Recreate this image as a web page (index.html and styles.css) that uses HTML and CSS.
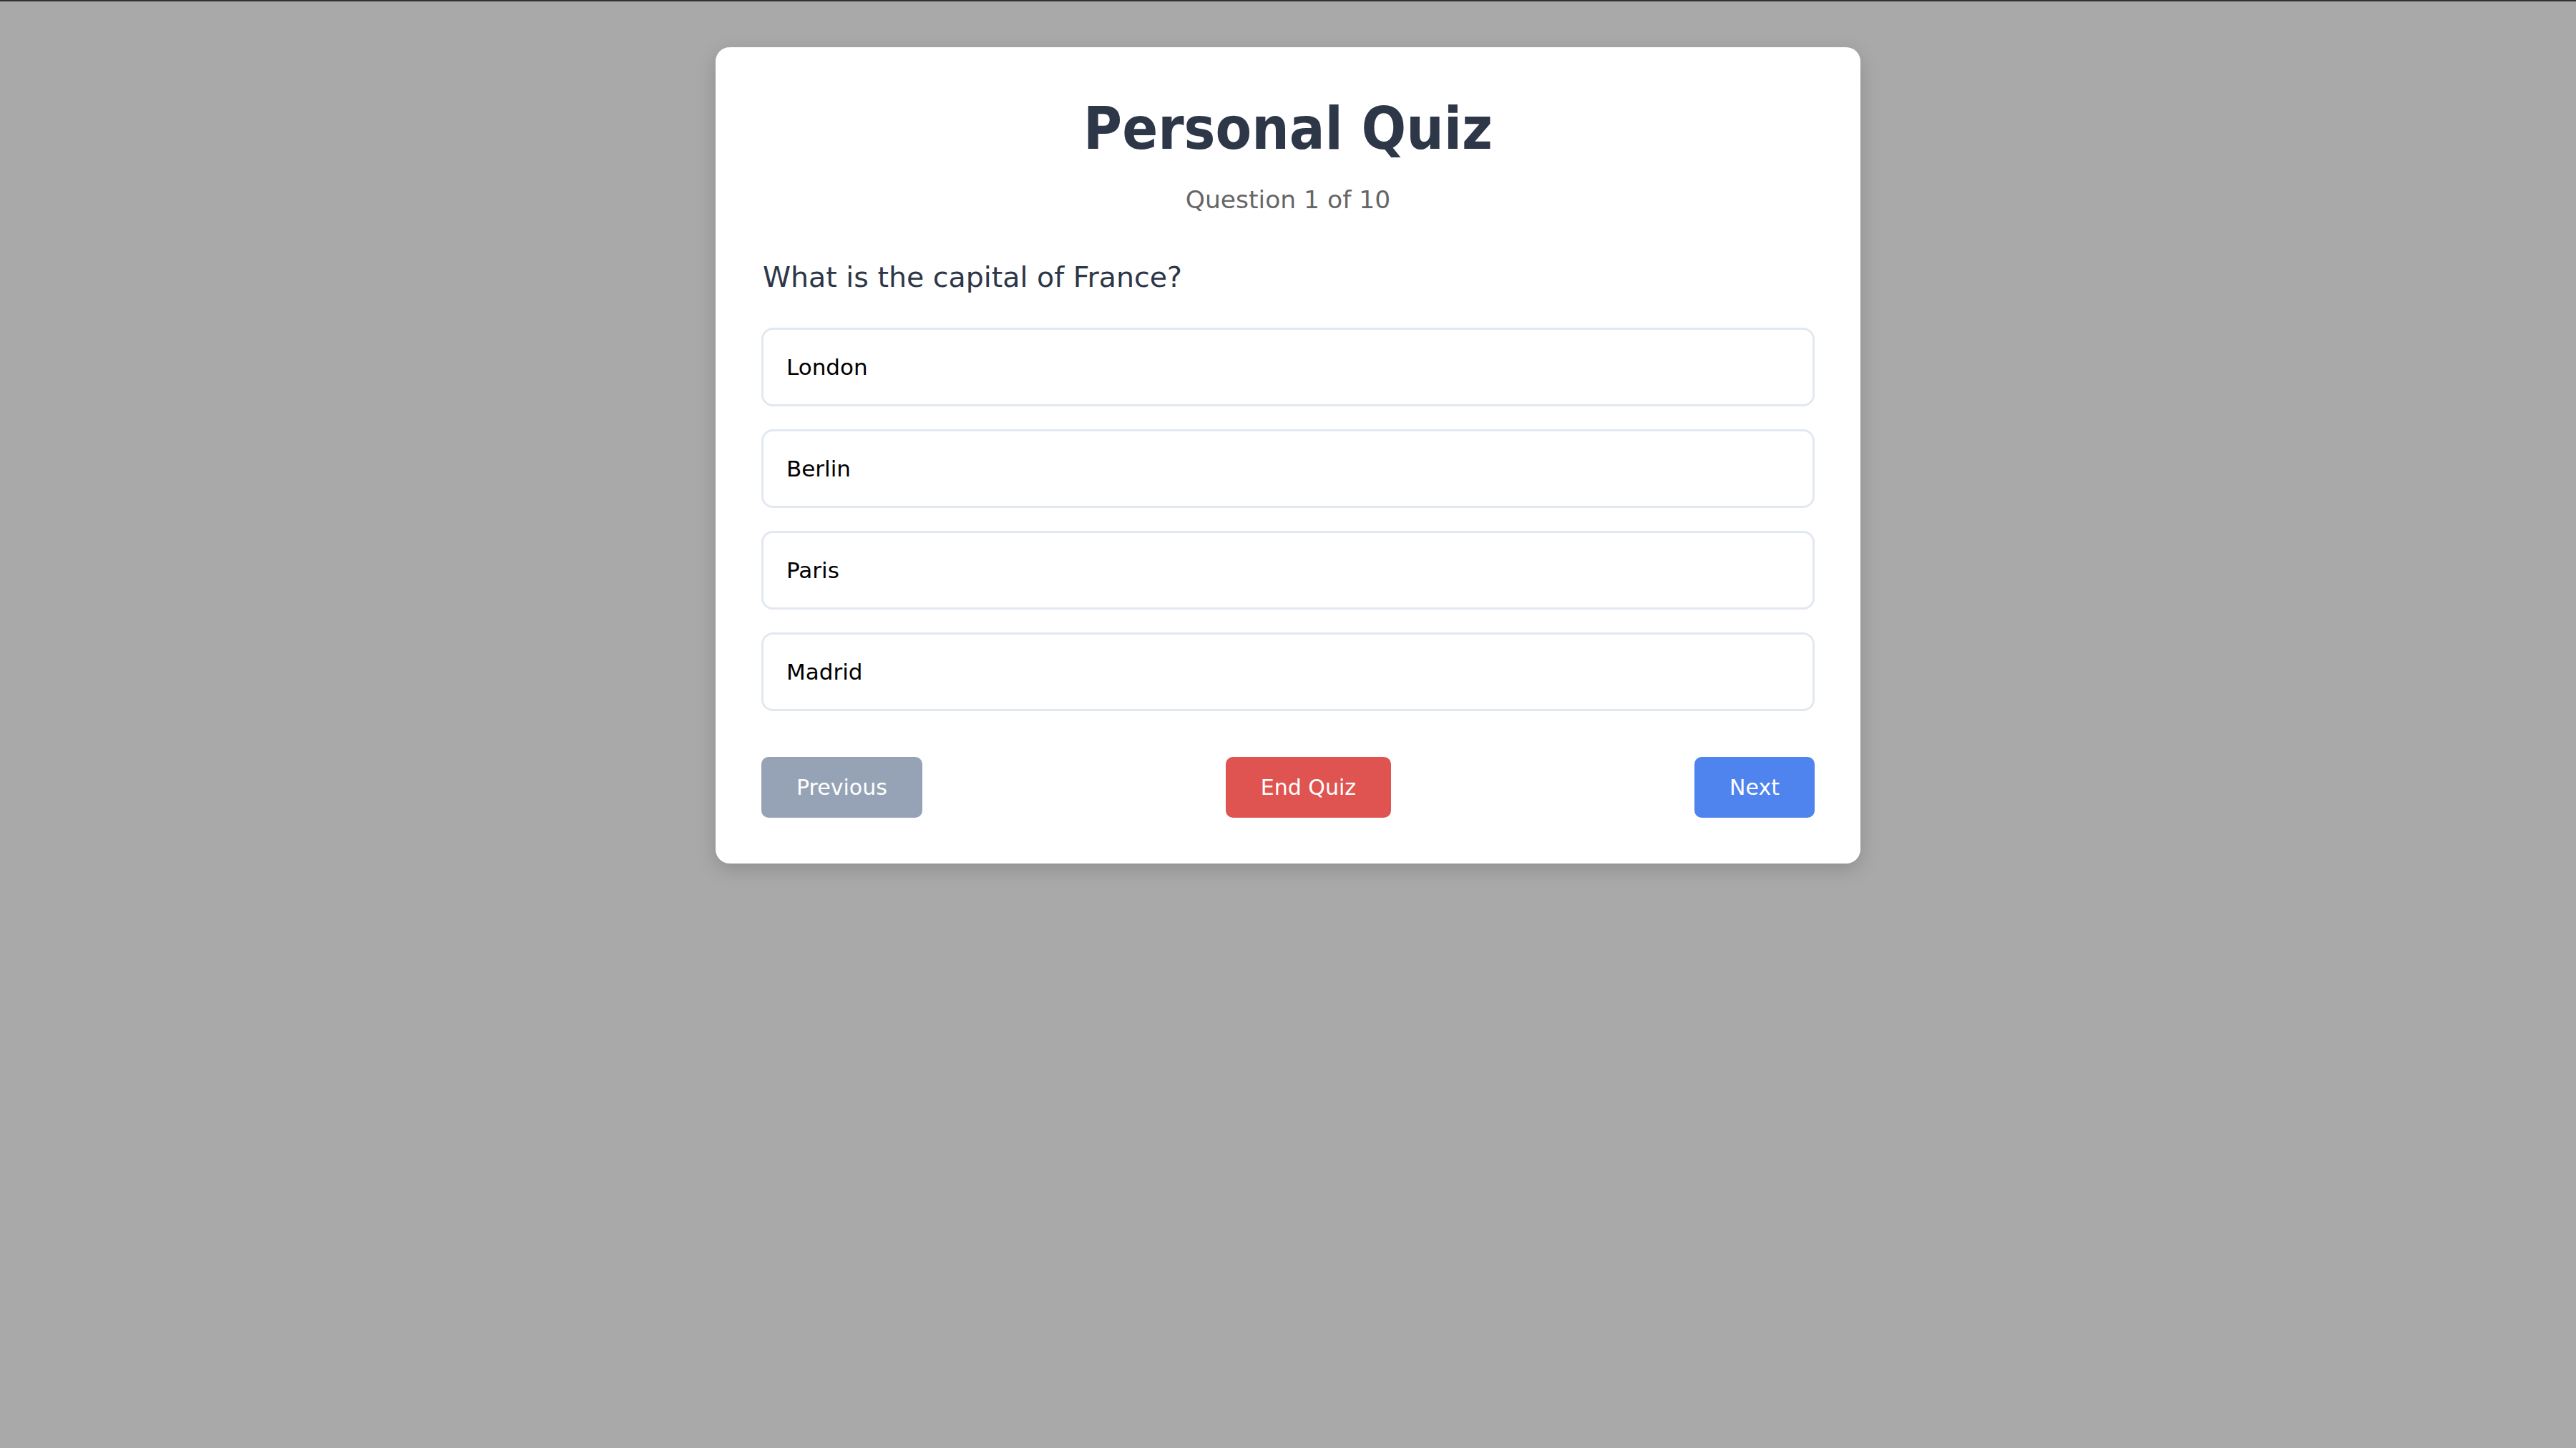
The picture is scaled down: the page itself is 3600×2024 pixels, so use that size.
FILE: index.html
```html
<!DOCTYPE html>
<html lang="en">
<head>
<meta charset="utf-8">
<title>Personal Quiz</title>
<link rel="stylesheet" href="styles.css">
</head>
<body>
<div class="page">
  <div class="card">
    <h1 class="title">Personal Quiz</h1>
    <p class="subtitle">Question 1 of 10</p>
    <h2 class="question">What is the capital of France?</h2>
    <div class="options">
      <button class="option">London</button>
      <button class="option">Berlin</button>
      <button class="option">Paris</button>
      <button class="option">Madrid</button>
    </div>
    <div class="actions">
      <button class="btn btn-prev">Previous</button>
      <button class="btn btn-end">End Quiz</button>
      <button class="btn btn-next">Next</button>
    </div>
  </div>
</div>
</body>
</html>
```
FILE: styles.css
```css
html, body {
  margin: 0;
  padding: 0;
}
body {
  background: #a9a9a9;
  border-top: 2px solid #333338;
  min-height: 2022px;
  box-sizing: border-box;
  font-family: "DejaVu Sans", "Liberation Sans", sans-serif;
}
.page {
  display: flex;
  justify-content: center;
  padding-top: 64px;
}
.card {
  width: 1600px;
  box-sizing: border-box;
  background: #ffffff;
  border-radius: 20px;
  padding: 64px;
  box-shadow: 0 8px 28px rgba(0, 0, 0, 0.16);
  display: flex;
  flex-direction: column;
}
.title {
  margin: 1px 0 0;
  font-family: "DejaVu Sans Condensed", "DejaVu Sans", sans-serif;
  font-stretch: condensed;
  font-weight: bold;
  font-size: 82px;
  line-height: 97px;
  color: #2d3748;
  text-align: center;
}
.subtitle {
  margin: 31px 0 0;
  font-size: 34.5px;
  line-height: 40px;
  color: #666666;
  text-align: center;
}
.question {
  margin: 65px 0 0;
  padding-left: 2px;
  font-size: 39.5px;
  line-height: 47px;
  font-weight: normal;
  color: #2d3748;
}
.options {
  margin-top: 47px;
  display: flex;
  flex-direction: column;
  gap: 32px;
}
.option {
  display: block;
  width: 100%;
  box-sizing: border-box;
  height: 110px;
  padding: 0 32px;
  border: 3px solid #e2e8f0;
  border-radius: 16px;
  background: #ffffff;
  font-family: "DejaVu Sans", sans-serif;
  font-size: 31px;
  line-height: 36px;
  color: #000000;
  text-align: left;
}
.actions {
  margin-top: 64px;
  display: flex;
  justify-content: space-between;
  align-items: center;
}
.btn {
  height: 85px;
  padding: 0 49px;
  border: none;
  border-radius: 10px;
  font-family: "DejaVu Sans", sans-serif;
  font-size: 30px;
  line-height: 37px;
  color: #ffffff;
}
.btn-prev {
  background: #96a3b6;
}
.btn-end {
  background: #df5450;
}
.btn-next {
  background: #4f83ee;
}
```
